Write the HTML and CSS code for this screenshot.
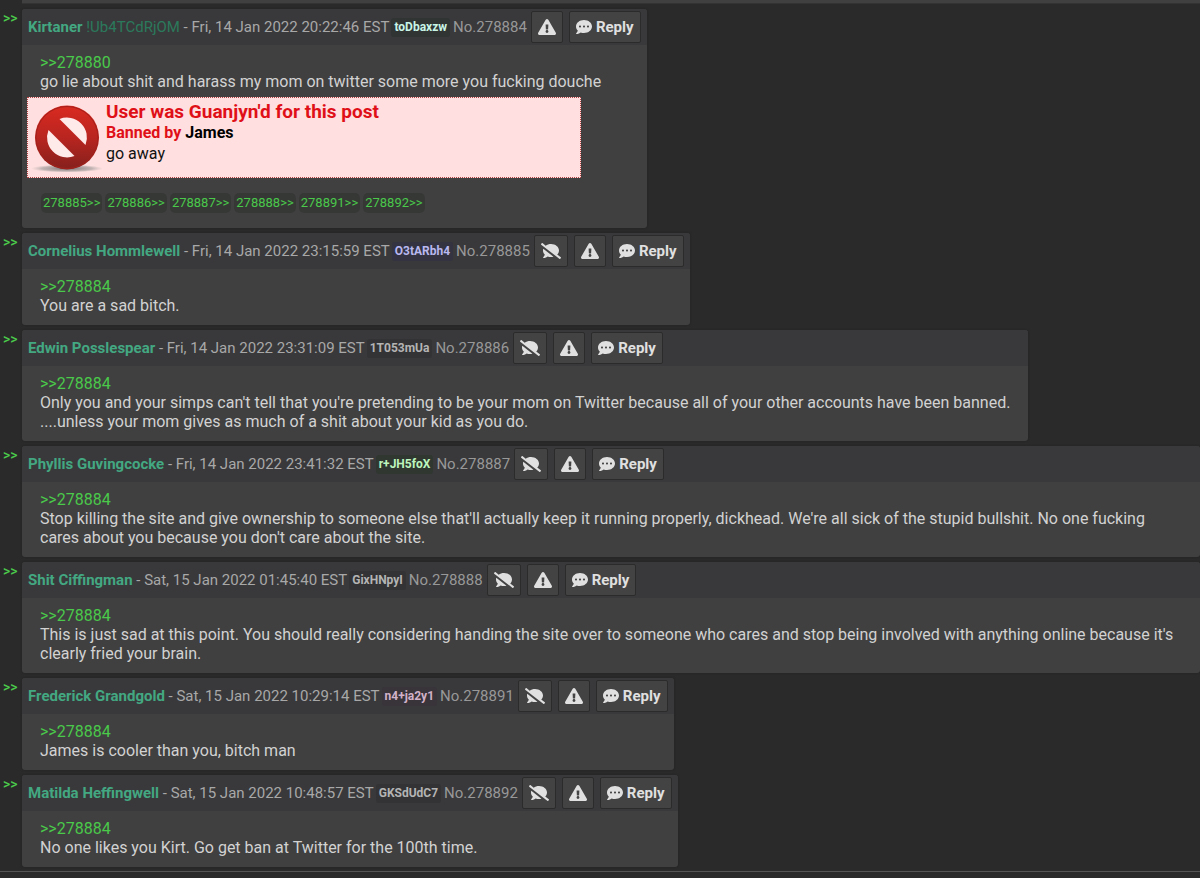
FILE: index.html
```html
<!DOCTYPE html>
<html lang="en">
<head>
<meta charset="utf-8">
<meta name="viewport" content="width=device-width, initial-scale=1">
<title>Thread No.278884</title>
<link rel="stylesheet" href="styles.css">
</head>
<body>
<svg class="sprite" aria-hidden="true">
  <symbol id="warn" viewBox="0 0 576 512"><path d="M569.517 440.013C587.975 472.007 564.806 512 527.94 512H48.054c-36.937 0-59.999-40.055-41.577-71.987L246.423 23.985c18.467-32.009 64.72-31.951 83.154 0l239.94 416.028zM288 354c-25.405 0-46 20.595-46 46s20.595 46 46 46 46-20.595 46-46-20.595-46-46-46zm-43.673-165.346l7.418 136c.347 6.364 5.609 11.346 11.982 11.346h48.546c6.373 0 11.635-4.982 11.982-11.346l7.418-136c.375-6.874-5.098-12.654-11.982-12.654h-63.383c-6.884 0-12.356 5.78-11.981 12.654z"/></symbol>
  <symbol id="mute" viewBox="0 0 640 512"><path d="M64 240c0 49.6 21.4 95 57 130.7-12.6 50.3-54.3 95.2-54.8 95.8-2.2 2.3-2.8 5.7-1.5 8.7 1.3 2.9 4.1 4.8 7.3 4.8 66.3 0 116-31.8 140.6-51.4 32.7 12.3 69 19.4 107.4 19.4 27.4 0 53.7-3.6 78.4-10L72.9 186.4c-5.6 17.1-8.9 35-8.9 53.6zm569.8 218.1l-114.4-88.4C554.6 334.1 576 289.2 576 240c0-114.9-114.6-208-256-208-65.1 0-124.2 20.1-169.4 52.7L45.5 3.4C38.5-2 28.5-.8 23 6.2L3.4 31.4c-5.4 7-4.2 17 2.8 22.4L594.5 508.6c7 5.4 17 4.2 22.4-2.8l19.6-25.3c5.4-6.8 4.1-16.9-2.7-22.4z"/></symbol>
  <symbol id="talk" viewBox="0 0 512 512"><path d="M256 32C114.6 32 0 125.1 0 240c0 49.6 21.4 95 57 130.7C44.5 421.1 2.7 466 2.2 466.5c-2.2 2.3-2.8 5.7-1.5 8.7S4.8 480 8 480c66.3 0 116-31.8 140.6-51.4 32.7 12.3 69 19.4 107.4 19.4 141.4 0 256-93.1 256-208S397.4 32 256 32zM128 272c-17.7 0-32-14.3-32-32s14.3-32 32-32 32 14.3 32 32-14.3 32-32 32zm128 0c-17.7 0-32-14.3-32-32s14.3-32 32-32 32 14.3 32 32-14.3 32-32 32zm128 0c-17.7 0-32-14.3-32-32s14.3-32 32-32 32 14.3 32 32-14.3 32-32 32z"/></symbol>
</svg>
<main class="thread">
  <div class="previous"></div>

  <div class="row">
    <a class="marker" href="#p278884">&gt;&gt;</a>
    <article class="post" id="p278884">
      <header class="head">
        <span><b class="name">Kirtaner</b> <span class="trip">!Ub4TCdRjOM</span> - Fri, 14 Jan 2022 20:22:46 EST</span>
        <span class="uid mint">toDbaxzw</span>
        <a class="number" href="#p278884">No.278884</a>
        <button class="btn" aria-label="Report"><svg class="icon"><use href="#warn"/></svg></button>
        <button class="btn"><svg class="icon talk"><use href="#talk"/></svg>Reply</button>
      </header>
      <div class="body">
        <p class="text"><a href="#p278880">&gt;&gt;278880</a><br>go lie about shit and harass my mom on twitter some more you fucking douche</p>
        <div class="ban">
          <svg class="ban-icon" viewBox="0 0 72 72" aria-hidden="true">
            <defs>
              <linearGradient id="red" x1="0" y1="0" x2="0" y2="1"><stop offset="0" stop-color="#d92a20"/><stop offset="0.5" stop-color="#b92520"/><stop offset="1" stop-color="#84201c"/></linearGradient>
              <radialGradient id="shade"><stop offset="0" stop-color="#555" stop-opacity="0.8"/><stop offset="0.7" stop-color="#888" stop-opacity="0.5"/><stop offset="1" stop-color="#aaa" stop-opacity="0"/></radialGradient>
            </defs>
            <ellipse cx="37" cy="67" rx="36" ry="4" fill="url(#shade)"/>
            <circle cx="37" cy="36" r="32" fill="url(#red)"/>
            <circle cx="37" cy="36" r="31" fill="none" stroke="#a3201b" stroke-width="1"/>
            <path d="M29.500 17.500A20 20 0 0 1 55.500 43.500Z" fill="#ffeaea"/>
            <path d="M18.500 28.500A20 20 0 0 0 44.500 54.500Z" fill="#ffeaea"/>
          </svg>
          <div>
            <strong class="ban-title">User was Guanjyn'd for this post</strong>
            <strong class="ban-by">Banned by <span>James</span></strong>
            <p class="ban-note">go away</p>
          </div>
        </div>
        <nav class="links" aria-label="Replies">
          <a href="#p278885">278885&gt;&gt;</a>
          <a href="#p278886">278886&gt;&gt;</a>
          <a href="#p278887">278887&gt;&gt;</a>
          <a href="#p278888">278888&gt;&gt;</a>
          <a href="#p278891">278891&gt;&gt;</a>
          <a href="#p278892">278892&gt;&gt;</a>
        </nav>
      </div>
    </article>
  </div>

  <div class="row">
    <a class="marker" href="#p278885">&gt;&gt;</a>
    <article class="post" id="p278885">
      <header class="head">
        <span><b class="name">Cornelius Hommlewell</b> - Fri, 14 Jan 2022 23:15:59 EST</span>
        <span class="uid violet">O3tARbh4</span>
        <a class="number" href="#p278885">No.278885</a>
        <button class="btn" aria-label="Hide"><svg class="icon mute"><use href="#mute"/></svg></button>
        <button class="btn" aria-label="Report"><svg class="icon"><use href="#warn"/></svg></button>
        <button class="btn"><svg class="icon talk"><use href="#talk"/></svg>Reply</button>
      </header>
      <div class="body">
        <p class="text"><a href="#p278884">&gt;&gt;278884</a><br>You are a sad bitch.</p>
      </div>
    </article>
  </div>

  <div class="row">
    <a class="marker" href="#p278886">&gt;&gt;</a>
    <article class="post" id="p278886">
      <header class="head">
        <span><b class="name">Edwin Posslespear</b> - Fri, 14 Jan 2022 23:31:09 EST</span>
        <span class="uid grey">1T053mUa</span>
        <a class="number" href="#p278886">No.278886</a>
        <button class="btn" aria-label="Hide"><svg class="icon mute"><use href="#mute"/></svg></button>
        <button class="btn" aria-label="Report"><svg class="icon"><use href="#warn"/></svg></button>
        <button class="btn"><svg class="icon talk"><use href="#talk"/></svg>Reply</button>
      </header>
      <div class="body">
        <p class="text"><a href="#p278884">&gt;&gt;278884</a><br>Only you and your simps can't tell that you're pretending to be your mom on Twitter because all of your other accounts have been banned.<br>....unless your mom gives as much of a shit about your kid as you do.</p>
      </div>
    </article>
  </div>

  <div class="row">
    <a class="marker" href="#p278887">&gt;&gt;</a>
    <article class="post" id="p278887">
      <header class="head">
        <span><b class="name">Phyllis Guvingcocke</b> - Fri, 14 Jan 2022 23:41:32 EST</span>
        <span class="uid green">r+JH5foX</span>
        <a class="number" href="#p278887">No.278887</a>
        <button class="btn" aria-label="Hide"><svg class="icon mute"><use href="#mute"/></svg></button>
        <button class="btn" aria-label="Report"><svg class="icon"><use href="#warn"/></svg></button>
        <button class="btn"><svg class="icon talk"><use href="#talk"/></svg>Reply</button>
      </header>
      <div class="body">
        <p class="text"><a href="#p278884">&gt;&gt;278884</a><br>Stop killing the site and give ownership to someone else that'll actually keep it running properly, dickhead. We're all sick of the stupid bullshit. No one fucking cares about you because you don't care about the site.</p>
      </div>
    </article>
  </div>

  <div class="row">
    <a class="marker" href="#p278888">&gt;&gt;</a>
    <article class="post" id="p278888">
      <header class="head">
        <span><b class="name">Shit Ciffingman</b> - Sat, 15 Jan 2022 01:45:40 EST</span>
        <span class="uid grey">GixHNpyI</span>
        <a class="number" href="#p278888">No.278888</a>
        <button class="btn" aria-label="Hide"><svg class="icon mute"><use href="#mute"/></svg></button>
        <button class="btn" aria-label="Report"><svg class="icon"><use href="#warn"/></svg></button>
        <button class="btn"><svg class="icon talk"><use href="#talk"/></svg>Reply</button>
      </header>
      <div class="body">
        <p class="text"><a href="#p278884">&gt;&gt;278884</a><br>This is just sad at this point. You should really considering handing the site over to someone who cares and stop being involved with anything online because it's clearly fried your brain.</p>
      </div>
    </article>
  </div>

  <div class="row">
    <a class="marker" href="#p278891">&gt;&gt;</a>
    <article class="post" id="p278891">
      <header class="head">
        <span><b class="name">Frederick Grandgold</b> - Sat, 15 Jan 2022 10:29:14 EST</span>
        <span class="uid pink">n4+ja2y1</span>
        <a class="number" href="#p278891">No.278891</a>
        <button class="btn" aria-label="Hide"><svg class="icon mute"><use href="#mute"/></svg></button>
        <button class="btn" aria-label="Report"><svg class="icon"><use href="#warn"/></svg></button>
        <button class="btn"><svg class="icon talk"><use href="#talk"/></svg>Reply</button>
      </header>
      <div class="body">
        <p class="text"><a href="#p278884">&gt;&gt;278884</a><br>James is cooler than you, bitch man</p>
      </div>
    </article>
  </div>

  <div class="row">
    <a class="marker" href="#p278892">&gt;&gt;</a>
    <article class="post" id="p278892">
      <header class="head">
        <span><b class="name">Matilda Heffingwell</b> - Sat, 15 Jan 2022 10:48:57 EST</span>
        <span class="uid grey">GKSdUdC7</span>
        <a class="number" href="#p278892">No.278892</a>
        <button class="btn" aria-label="Hide"><svg class="icon mute"><use href="#mute"/></svg></button>
        <button class="btn" aria-label="Report"><svg class="icon"><use href="#warn"/></svg></button>
        <button class="btn"><svg class="icon talk"><use href="#talk"/></svg>Reply</button>
      </header>
      <div class="body">
        <p class="text"><a href="#p278884">&gt;&gt;278884</a><br>No one likes you Kirt. Go get ban at Twitter for the 100th time.</p>
      </div>
    </article>
  </div>
</main>
<hr class="end">
</body>
</html>
```
FILE: styles.css
```css
* { box-sizing: border-box; }
body {
  margin: 0;
  background: #2a2a2a;
  color: #d2d2d2;
  font: 16px/19px Roboto, "Liberation Sans", sans-serif;
}
p { margin: 0; }
a { color: #4ac94a; text-decoration: none; }
.sprite { display: none; }

.thread { display: flex; flex-direction: column; gap: 5px; }
.previous { height: 4px; margin-left: 22px; background: #404040; border-bottom: 1px solid #333; }
.row { display: flex; align-items: flex-start; }
.marker { flex: none; width: 22px; padding-left: 3px; font-size: 14px; line-height: 18px; font-weight: 500; }

.post {
  min-width: 0;
  background: #404040;
  border-radius: 3px;
  box-shadow: 0 0 2px #202020;
}
.head {
  display: flex;
  align-items: center;
  height: 36px;
  padding: 0 6px;
  background: #39393b;
  border-radius: 3px 3px 0 0;
  color: #a8a8a8;
  font-size: 15px;
  white-space: nowrap;
}
.name { color: #43a882; }
.trip { color: #2b795c; }
.uid {
  margin: 0 3px 0 2px;
  padding: 0 3px;
  border-radius: 3px;
  background: #333335;
  font-size: 12px;
  font-weight: 700;
}
.mint { background: #303433; color: #c8f5e6; }
.violet { background: #333341; color: #b9b8ef; }
.grey { color: #b4b4b4; }
.green { background: #303730; color: #bdf5bd; }
.pink { background: #39333a; color: #d2b2c8; }
.number { color: #989898; }

.btn {
  display: flex;
  align-items: center;
  gap: 4px;
  height: 32px;
  margin-left: 6px;
  padding: 0 6px;
  border: 1px solid #2b2b2b;
  border-radius: 2px;
  background: #434343;
  color: #e0e0e0;
  font: 700 15px/20px Roboto, sans-serif;
}
.number + .btn { margin-left: 4px; }
.icon { width: 18px; height: 16px; fill: currentColor; }
.icon.mute { width: 20px; }
.icon.talk { width: 16px; }

.body { padding: 8px 5px 10px; }
.text { padding: 0 13px; }

.ban {
  display: flex;
  gap: 4px;
  width: 554px;
  max-width: 100%;
  margin-top: 6px;
  padding: 3px 2px;
  border: 1px dotted #b04040;
  background: #ffdfdf;
  color: #111;
}
.ban-icon { flex: none; width: 72px; height: 73px; }
.ban-title, .ban-by { display: block; color: #df1018; }
.ban-title { font-size: 19px; line-height: 22px; }
.ban-by { line-height: 20px; }
.ban-by span { color: #000; }
.ban-note { line-height: 22px; }

.links { display: flex; flex-wrap: wrap; gap: 3px; padding: 15px 14px 5px; }
.links a {
  padding: 0 2px;
  border-radius: 5px;
  background: #363836;
  font-size: 13px;
  line-height: 20px;
}
.end { height: 1px; margin: 4px 0 0; border: 0; background: #555; }
```
